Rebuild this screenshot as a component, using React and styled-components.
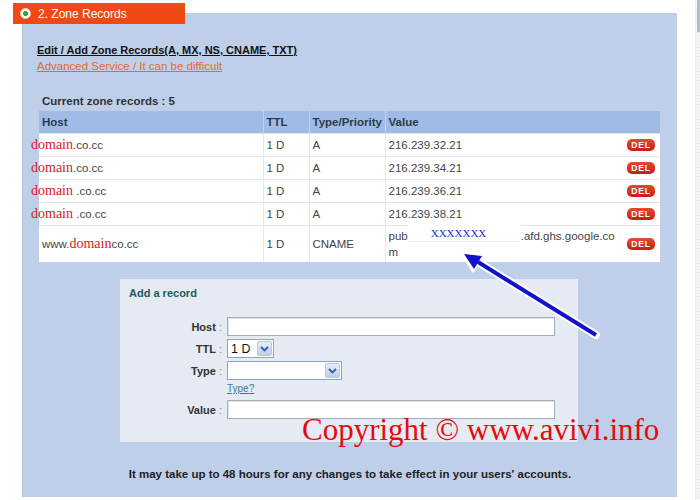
import styled, { createGlobalStyle } from "styled-components";

const GlobalStyle = createGlobalStyle`
    * { box-sizing: border-box; }
    body {
        margin: 0;
        background: #fff;
        font-family: "Liberation Sans", Arial, sans-serif;
    }
`

const records = [
    { id: 1, sub: ".co.cc", ttl: "1 D", type: "A", value: "216.239.32.21" },
    { id: 2, sub: ".co.cc", ttl: "1 D", type: "A", value: "216.239.34.21" },
    { id: 3, sub: " .co.cc", ttl: "1 D", type: "A", value: "216.239.36.21" },
    { id: 4, sub: " .co.cc", ttl: "1 D", type: "A", value: "216.239.38.21" },
]

const Chevron = () => (
    <svg width="9" height="6" viewBox="0 0 9 6">
        <path d="M1 1 L4.5 4.5 L8 1" fill="none" stroke="#3a5a9a" strokeWidth="1.8" />
    </svg>
)

const Select = ({ width, value }) => (
    <SelectBox $width={width}>
        <span>{value}</span>
        <DropBtn><Chevron /></DropBtn>
    </SelectBox>
)

const App = () => {
    return (
        <Page>
            <GlobalStyle />
            <Main>
                <Tab>
                    <Radio />
                    2. Zone Records
                </Tab>
                <Panel>
                    <Intro>
                        <Title>Edit / Add Zone Records(A, MX, NS, CNAME, TXT)</Title>
                        <Warn>Advanced Service / It can be difficult</Warn>
                        <Count>Current zone records : 5</Count>
                    </Intro>

                    <Table>
                        <colgroup>
                            <col style={{ width: 224 }} />
                            <col style={{ width: 46 }} />
                            <col style={{ width: 76 }} />
                            <col />
                        </colgroup>
                        <thead>
                            <tr>
                                <Th>Host</Th>
                                <Th>TTL</Th>
                                <Th>Type/Priority</Th>
                                <Th>Value</Th>
                            </tr>
                        </thead>
                        <tbody>
                            {records.map((r) => (
                                <tr key={r.id}>
                                    <Td><Domain $pull>domain</Domain>{r.sub}</Td>
                                    <Td>{r.ttl}</Td>
                                    <Td>{r.type}</Td>
                                    <Td>
                                        <ValueCell>
                                            <span>{r.value}</span>
                                            <Del>DEL</Del>
                                        </ValueCell>
                                    </Td>
                                </tr>
                            ))}
                            <tr>
                                <Td $tall>www.<Domain>domain</Domain>co.cc</Td>
                                <Td $tall>1 D</Td>
                                <Td $tall>CNAME</Td>
                                <Td $tall>
                                    <ValueCell>
                                        <Wrapped>
                                            pub<Mask>XXXXXXX</Mask>.afd.ghs.google.co
                                            <br />m
                                        </Wrapped>
                                        <Del>DEL</Del>
                                    </ValueCell>
                                </Td>
                            </tr>
                        </tbody>
                    </Table>

                    <AddBox>
                        <AddTitle>Add a record</AddTitle>
                        <Form>
                            <Label><b>Host</b> :</Label>
                            <Input $width={328} />
                            <Label><b>TTL</b> :</Label>
                            <Select width={47} value="1 D" />
                            <Label><b>Type</b> :</Label>
                            <Select width={115} value="" />
                            <span />
                            <Help>Type?</Help>
                            <Label><b>Value</b> :</Label>
                            <Input $width={328} />
                        </Form>
                    </AddBox>

                    <Note>It may take up to 48 hours for any changes to take effect in your users' accounts.</Note>
                </Panel>
            </Main>
            <Strip />

            <Watermark>Copyright © www.avivi.info</Watermark>
            <Arrow width="700" height="500" viewBox="0 0 700 500">
                <line x1="596" y1="335" x2="478" y2="262" stroke="#fff" strokeWidth="8" strokeLinecap="round" />
                <polygon points="462,253 484,254 473,271" fill="#fff" stroke="#fff" strokeWidth="3" strokeLinejoin="round" />
                <line x1="596" y1="335" x2="478" y2="262" stroke="#1212cc" strokeWidth="4" />
                <polygon points="464,254 482,256 474,269" fill="#1212cc" />
            </Arrow>
        </Page>
    )
}

export default App;

const Page = styled.div`
    position: relative;
    width: 700px;
    height: 500px;
    overflow: hidden;
    display: flex;
    background: #fff;
`
const Main = styled.div`
    flex: 1;
    padding-top: 3px;
`
const Strip = styled.div`
    width: 5px;
    border-left: 1px solid #eceff2;
    background:
        linear-gradient(#b9bcc0, #b9bcc0) right top / 3px 32px no-repeat,
        repeating-linear-gradient(0deg, #f6f6f6 0 2px, #ebebeb 2px 3px);
`
const Tab = styled.div`
    position: relative;
    z-index: 1;
    margin-left: 13px;
    width: 172px;
    height: 21px;
    display: flex;
    align-items: center;
    gap: 7px;
    padding-left: 7px;
    background: #ef4a14;
    color: #fff;
    font-size: 12px;
`
const Radio = styled.span`
    width: 11px;
    height: 11px;
    border-radius: 50%;
    background: radial-gradient(circle, #3e9c3a 0 2.2px, #fff 2.7px);
    border: 1px solid #f4d8cc;
`
const Panel = styled.div`
    margin-left: 22px;
    margin-top: -11px;
    width: 655px;
    height: 484px;
    padding-top: 29px;
    background: #bfcfea;
    border-left: 1px solid #b2c2de;
`
const Intro = styled.div`
    padding-left: 14px;
    font-size: 11px;
    line-height: 16px;
`
const Title = styled.div`
    font-weight: bold;
    color: #111;
    text-decoration: underline;
`
const Warn = styled.div`
    font-size: 11.5px;
    color: #e2693a;
    text-decoration: underline;
`
const Count = styled.div`
    margin: 19px 0 2px 5px;
    font-size: 11.5px;
    font-weight: bold;
    color: #333;
`
const Table = styled.table`
    margin-left: 16px;
    width: 621px;
    border-collapse: collapse;
    table-layout: fixed;
    background: #fff;
    font-size: 11.5px;
    color: #444;
`
const Th = styled.th`
    height: 22px;
    padding: 0 3px;
    text-align: left;
    font-weight: bold;
    color: #2e3a4a;
    background: #9fbbe6;
    border-left: 1px solid #c3d4ee;
    &:first-child { border-left: none; }
`
const Td = styled.td`
    height: ${(p) => (p.$tall ? "37px" : "23px")};
    padding: 0 3px;
    border-top: 1px solid #e2e4e8;
    border-left: 1px solid #e6e8eb;
    white-space: nowrap;
    overflow: visible;
    &:first-child { border-left: none; }
`
const Domain = styled.span`
    margin-left: ${(p) => (p.$pull ? "-11px" : "0")};
    font-family: "Liberation Serif", "Times New Roman", serif;
    font-size: 14px;
    color: #d8201c;
`
const ValueCell = styled.div`
    display: flex;
    align-items: center;
    justify-content: space-between;
    padding-right: 2px;
`
const Wrapped = styled.div`
    line-height: 16px;
    white-space: nowrap;
`
const Mask = styled.span`
    display: inline-block;
    width: 113px;
    padding-left: 23px;
    margin-top: -3px;
    background: #fff;
    box-shadow: 0 1px 0 #f0f0f0;
    font-family: "Liberation Serif", "Times New Roman", serif;
    font-size: 11px;
    color: #2230c0;
    vertical-align: top;
`
const Del = styled.span`
    display: inline-block;
    width: 28px;
    height: 12px;
    border-radius: 5px;
    background: linear-gradient(#e54a32, #c81e10);
    color: #fff;
    font-size: 8.5px;
    font-weight: bold;
    line-height: 12px;
    letter-spacing: 0.8px;
    text-align: center;
`
const AddBox = styled.div`
    margin: 17px 0 0 97px;
    width: 458px;
    height: 163px;
    padding: 7px 9px;
    background: #e5eaf3;
`
const AddTitle = styled.div`
    font-size: 11px;
    font-weight: bold;
    line-height: 14px;
    color: #1f5a5a;
`
const Form = styled.div`
    margin-top: 17px;
    display: grid;
    grid-template-columns: 93px auto;
    column-gap: 5px;
    row-gap: 3px;
    align-items: center;
    justify-items: start;
`
const Label = styled.div`
    justify-self: end;
    font-size: 11px;
    color: #888;
    b { color: #333; }
`
const Input = styled.div`
    width: ${(p) => p.$width}px;
    height: 19px;
    background: #fff;
    border: 1px solid #a5adb8;
    box-shadow: inset 1px 1px 0 #e4e4e4;
`
const SelectBox = styled.div`
    width: ${(p) => p.$width}px;
    height: 19px;
    display: flex;
    align-items: center;
    justify-content: space-between;
    padding: 1px 1px 1px 3px;
    background: #fff;
    border: 1px solid #8ea4c4;
    font-size: 12.5px;
    color: #111;
`
const DropBtn = styled.span`
    width: 15px;
    height: 15px;
    display: grid;
    place-items: center;
    border: 1px solid #b5c8e8;
    border-radius: 2px;
    background: linear-gradient(#e6eefb, #bccdee);
`
const Help = styled.a`
    margin: -1px 0 1px;
    font-size: 10px;
    line-height: 14px;
    color: #3d7a94;
    text-decoration: underline;
`
const Note = styled.div`
    margin-top: 25px;
    text-align: center;
    font-size: 11.5px;
    font-weight: bold;
    line-height: 14px;
    color: #222;
`
const Watermark = styled.div`
    position: absolute;
    left: 302px;
    top: 414px;
    font-family: "Liberation Serif", "Times New Roman", serif;
    font-size: 31px;
    line-height: 31px;
    color: #e60a0a;
    white-space: nowrap;
`
const Arrow = styled.svg`
    position: absolute;
    left: 0;
    top: 0;
    pointer-events: none;
`
